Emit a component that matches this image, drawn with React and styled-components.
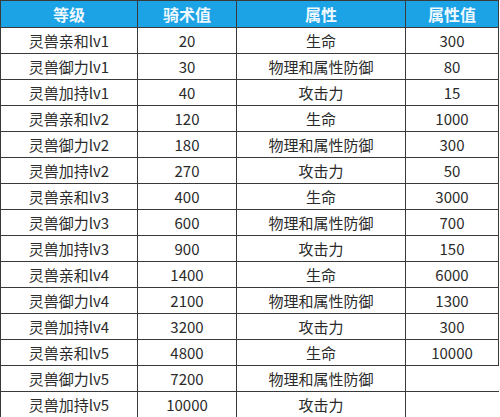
import React from 'react';
import styled, { createGlobalStyle } from 'styled-components';

const GlobalStyle = createGlobalStyle`
  html, body {
    margin: 0;
    padding: 0;
    background: #ffffff;
  }
`;

const rows = [
  ['灵兽亲和lv1', '20', '生命', '300'],
  ['灵兽御力lv1', '30', '物理和属性防御', '80'],
  ['灵兽加持lv1', '40', '攻击力', '15'],
  ['灵兽亲和lv2', '120', '生命', '1000'],
  ['灵兽御力lv2', '180', '物理和属性防御', '300'],
  ['灵兽加持lv2', '270', '攻击力', '50'],
  ['灵兽亲和lv3', '400', '生命', '3000'],
  ['灵兽御力lv3', '600', '物理和属性防御', '700'],
  ['灵兽加持lv3', '900', '攻击力', '150'],
  ['灵兽亲和lv4', '1400', '生命', '6000'],
  ['灵兽御力lv4', '2100', '物理和属性防御', '1300'],
  ['灵兽加持lv4', '3200', '攻击力', '300'],
  ['灵兽亲和lv5', '4800', '生命', '10000'],
  ['灵兽御力lv5', '7200', '物理和属性防御', ''],
  ['灵兽加持lv5', '10000', '攻击力', ''],
];

const widths = [137, 99, 169, 93];

const Wrapper = styled.div`
  width: 500px;
  height: 417px;
  overflow: hidden;
  background: #fff;
`;

const Table = styled.table`
  border-collapse: collapse;
  table-layout: fixed;
  width: 499px;
  font-family: "Noto Sans CJK SC", "Noto Sans", sans-serif;
  font-size: 15px;
`;

const HeadCell = styled.th`
  height: 26px;
  padding: 0;
  background: #1ba3e6;
  color: #eef8ff;
  font-weight: bold;
  font-size: 16px;
  text-align: center;
  border: 1px solid #3a3a3a;
  line-height: 24px;
`;

const Cell = styled.td`
  height: 25px;
  padding: 0;
  color: #2a2a2a;
  text-align: center;
  border: 1px solid #3a3a3a;
  border-right-color: ${(p) => (p.$open ? 'transparent' : '#3a3a3a')};
  line-height: 24px;
  white-space: nowrap;
`;

const App = () => {
  return (
    <Wrapper>
      <GlobalStyle />
      <Table>
        <colgroup>
          {widths.map((w, i) => (
            <col key={i} style={{ width: w }} />
          ))}
        </colgroup>
        <thead>
          <tr>
            <HeadCell>等级</HeadCell>
            <HeadCell>骑术值</HeadCell>
            <HeadCell>属性</HeadCell>
            <HeadCell>属性值</HeadCell>
          </tr>
        </thead>
        <tbody>
          {rows.map((r, i) => (
            <tr key={i}>
              {r.map((c, j) => (
                <Cell key={j} $open={j === 3 && c === ''}>
                  {c}
                </Cell>
              ))}
            </tr>
          ))}
        </tbody>
      </Table>
    </Wrapper>
  );
};

export default App;
